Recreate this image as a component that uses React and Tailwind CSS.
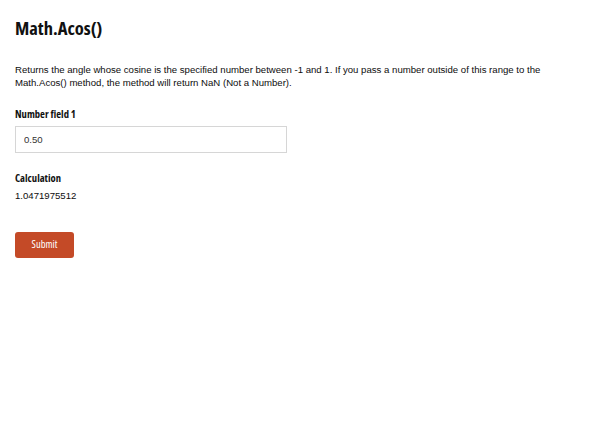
import React, { useState } from 'react';

export default function App() {
  const [value, setValue] = useState('0.50');
  const num = parseFloat(value);
  const result = isNaN(num) || num < -1 || num > 1 ? 'NaN' : Math.acos(num).toFixed(10);

  return (
    <div className="min-h-screen bg-white px-[15px] pt-[15px] text-[#111] [font-family:Liberation_Sans,Arial,sans-serif]">
      <h1 className="font-['Open_Sans',sans-serif] font-stretch-condensed text-[18.5px] font-bold leading-[26px]">
        Math.Acos()
      </h1>

      <p className="mt-[22px] w-[560px] text-[9.6px] leading-[13px] text-[#0d0d0d]">
        Returns the angle whose cosine is the specified number between -1 and 1. If you pass a number outside of this range to the
        Math.Acos() method, the method will return NaN (Not a Number).
      </p>

      {/* Input field */}
      <div className="mt-[17px]">
        <label className="block font-['Open_Sans',sans-serif] font-stretch-condensed text-[10.6px] font-bold leading-[16px]">
          Number field 1
        </label>
        <input
          type="text"
          value={value}
          onChange={(e) => setValue(e.target.value)}
          className="mt-[4px] h-[27px] w-[272px] border border-[#d6d6d6] px-[8px] text-[9.6px] text-[#333] outline-none"
        />
      </div>

      {/* Result */}
      <div className="mt-[17px]">
        <div className="font-['Open_Sans',sans-serif] font-stretch-condensed text-[10.6px] font-bold leading-[16px]">
          Calculation
        </div>
        <div className="mt-[2px] text-[9.6px] leading-[15px] text-[#0d0d0d]">
          {result}
        </div>
      </div>

      <button className="mt-[29px] h-[26px] w-[59px] rounded-[3px] bg-[#c44a27] font-['Open_Sans',sans-serif] font-stretch-condensed text-[10.5px] text-white">
        Submit
      </button>
    </div>
  );
}
